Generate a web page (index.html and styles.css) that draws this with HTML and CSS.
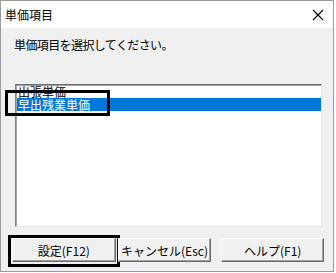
FILE: index.html
```html
<!DOCTYPE html>
<html lang="ja">
<head>
  <meta charset="UTF-8">
  <title>単価項目</title>
  <link rel="stylesheet" href="styles.css">
</head>
<body>
  <div class="window">
    <div class="titlebar">
      <span class="title">単価項目</span>
      <svg class="close" width="12" height="12" viewBox="0 0 12 12">
        <path d="M1 1 L11 11 M11 1 L1 11" stroke="#000" stroke-width="1.1" fill="none"/>
      </svg>
    </div>
    <div class="content">
      <p class="prompt">単価項目を選択してください。</p>
      <div class="listbox">
        <div class="item">出張単価</div>
        <div class="item selected">早出残業単価</div>
        <div class="mark mark-list"></div>
      </div>
      <div class="buttons">
        <button class="btn btn-ok">設定(F12)<span class="mark mark-btn"></span></button>
        <button class="btn btn-cancel">キャンセル(Esc)</button>
        <button class="btn btn-help">ヘルプ(F1)</button>
      </div>
    </div>
  </div>
</body>
</html>
```

FILE: styles.css
```css
body {
  margin: 0;
  background-color: #ffffff;
  font-family: "Noto Sans CJK JP", "Liberation Sans", sans-serif;
  font-size: 12px;
  color: #000000;
}

.window {
  width: 332px;
  height: 270px;
  border: 1px solid #9a9a9a;
  display: flex;
  flex-direction: column;
  background-color: #f0f0f0;
}

.titlebar {
  height: 27px;
  background-color: #ffffff;
  display: flex;
  align-items: center;
  justify-content: space-between;
  padding: 0 9px 0 4px;
}

.title {
  font-size: 12px;
  line-height: 14px;
}

.close {
  display: block;
}

.content {
  flex: 1;
  padding: 0 9px 0 14px;
}

.prompt {
  margin: 10px 0 0 -1px;
  line-height: 14px;
  letter-spacing: -0.6px;
}

.listbox {
  position: relative;
  margin-top: 32px;
  width: 304px;
  height: 141px;
  background-color: #ffffff;
  border-top: 1px solid #6d6d6d;
  border-left: 1px solid #828282;
  border-right: 1px solid #e3e3e3;
  border-bottom: 1px solid #e3e3e3;
  box-shadow: inset 1px 1px 0 #a0a0a0;
  padding-left: 1px;
}

.item {
  height: 13px;
  line-height: 13px;
  padding-left: 1px;
  white-space: nowrap;
}

.selected {
  background-color: #0078d7;
  color: #ffffff;
}

.buttons {
  display: flex;
  margin-top: 11px;
  margin-left: -3px;
}

.btn {
  position: relative;
  height: 24px;
  padding: 0;
  font-family: inherit;
  font-size: 12px;
  background-color: #f0f0f0;
  border-top: 1px solid #ffffff;
  border-left: 1px solid #ffffff;
  border-right: 1px solid #696969;
  border-bottom: 1px solid #696969;
  box-shadow: inset -1px -1px 0 #a0a0a0;
  color: #000000;
}

.btn-ok {
  width: 104px;
}

.btn-cancel {
  width: 94px;
  margin-left: 2px;
}

.btn-help {
  width: 103px;
  margin-left: 10px;
}

.mark {
  position: absolute;
  border: 3px solid #000000;
  pointer-events: none;
}

.mark-list {
  left: -11px;
  top: 5px;
  width: 99px;
  height: 20px;
}

.mark-btn {
  left: -5px;
  top: -4px;
  width: 106px;
  height: 26px;
}
```
